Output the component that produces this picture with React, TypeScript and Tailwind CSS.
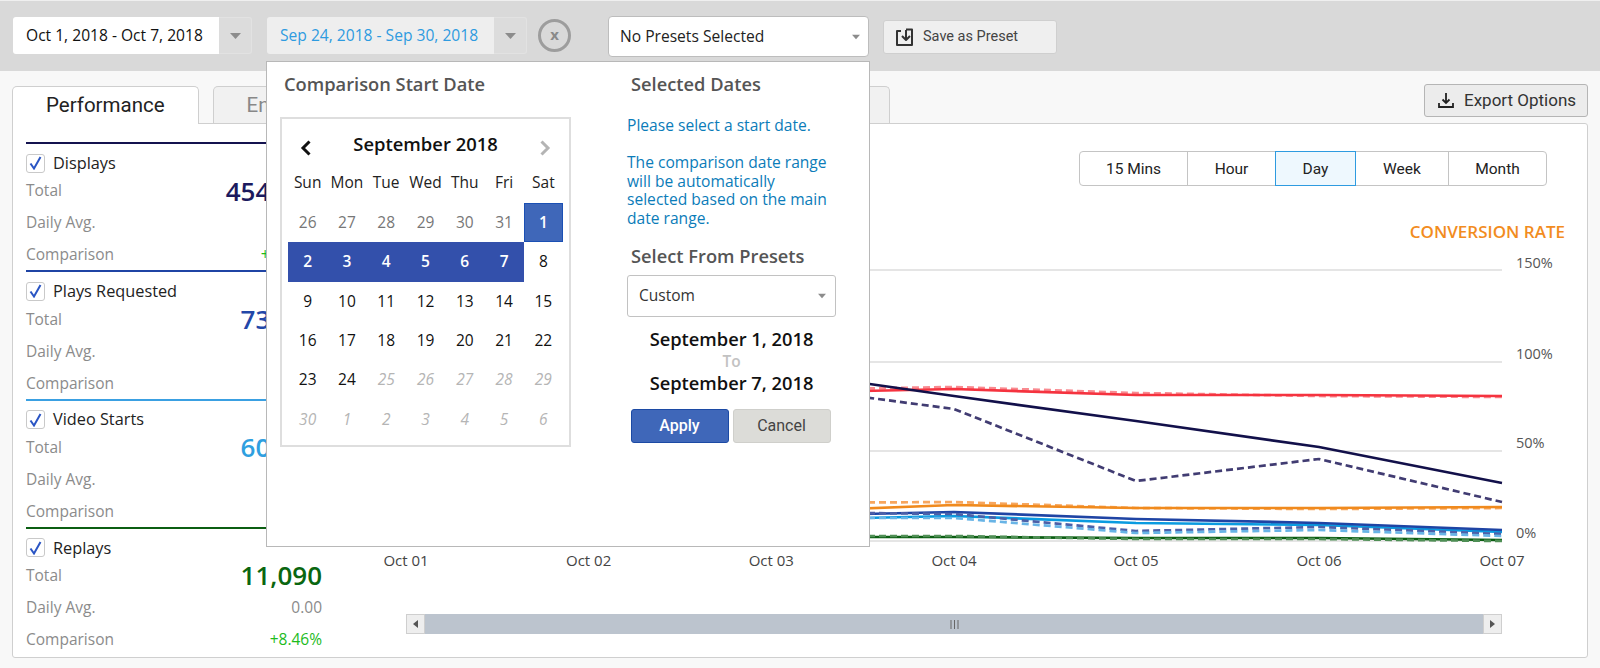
const openSans = "font-['Open_Sans',sans-serif]";

const metrics = [
  { name: "Displays", total: "454,182", avg: "0.00", comparison: "+12.46%", line: "border-[#14134f]", value: "text-[#1c1a5e]" },
  { name: "Plays Requested", total: "73,215", avg: "0.00", comparison: "+8.46%", line: "border-[#1f44a4]", value: "text-[#2347a8]" },
  { name: "Video Starts", total: "60,348", avg: "0.00", comparison: "+8.46%", line: "border-[#3aa0e2]", value: "text-[#2f9fe0]" },
  { name: "Replays", total: "11,090", avg: "0.00", comparison: "+8.46%", line: "border-[#0b5e12]", value: "text-[#0a6610]" },
];

const weekdays = ["Sun", "Mon", "Tue", "Wed", "Thu", "Fri", "Sat"];

type Day = { label: number; kind: "muted" | "normal" | "start" | "range" | "off" };

const days: Day[] = [
  ...[26, 27, 28, 29, 30, 31].map((label): Day => ({ label, kind: "muted" })),
  { label: 1, kind: "start" },
  ...[2, 3, 4, 5, 6, 7].map((label): Day => ({ label, kind: "range" })),
  ...[8, 9, 10, 11, 12, 13, 14, 15, 16, 17, 18, 19, 20, 21, 22, 23, 24].map((label): Day => ({ label, kind: "normal" })),
  ...[25, 26, 27, 28, 29, 30, 1, 2, 3, 4, 5, 6].map((label): Day => ({ label, kind: "off" })),
];

const xs = [406, 588.6, 771.3, 954, 1136, 1319, 1502];

const series = [
  { color: "#f7a65e", ys: [503, 503, 503, 502, 508, 509, 508], dash: "7 4" },
  { color: "#f08a1d", ys: [512, 512, 512, 505, 508, 508, 507] },
  { color: "#f98a90", ys: [390, 390, 390, 387, 393, 396, 397], dash: "7 4" },
  { color: "#f5333f", ys: [393, 393, 393, 389, 395, 395, 396] },
  { color: "#12104a", ys: [370, 370, 370, 396, 421, 447, 483] },
  { color: "#413c72", ys: [385, 385, 385, 409, 481, 459, 502], dash: "7 4" },
  { color: "#0a9be0", ys: [520, 520, 520, 516, 523, 525, 532] },
  { color: "#1f44a4", ys: [516, 516, 516, 512, 519, 523, 530] },
  { color: "#4c60a8", ys: [512, 512, 512, 514, 531, 527, 534], dash: "7 4" },
  { color: "#68b4e6", ys: [518, 518, 518, 518, 533, 530, 536], dash: "7 4" },
  { color: "#0b5e12", ys: [537, 537, 537, 537, 538, 538, 540] },
  { color: "#4f8f55", ys: [536, 536, 536, 536, 539, 539, 541], dash: "7 4" },
];

const Caret = ({ className }: { className: string }) => (
  <svg width="11" height="6" viewBox="0 0 11 6" className={className}>
    <path d="M0 0h11L5.5 6z" fill="currentColor" />
  </svg>
);

const DateRange = ({ label, active }: { label: string; active?: boolean }) => (
  <div className="flex h-[37px]">
    <div
      className={`flex items-center rounded-l-[3px] px-[13px] text-[15.6px] ${
        active ? "w-[227px] bg-[#eeeeee] text-[#2e9be0]" : "w-[206px] bg-white text-[#111]"
      }`}
    >
      {label}
    </div>
    <div className="flex w-[33px] items-center justify-center rounded-r-[3px] border border-l-0 border-[#e2e2e2] bg-[#dcdcdc]">
      <Caret className="text-[#8c8c8c]" />
    </div>
  </div>
);

const Metric = ({ metric }: { metric: (typeof metrics)[number] }) => (
  <section className={`h-[128.3px] border-t-2 pt-[9px] ${metric.line}`}>
    <label className="flex h-5 items-center gap-2">
      <span className="flex size-[19px] items-center justify-center rounded-[3px] border border-[#c9c9c9] bg-white">
        <svg width="13" height="14" viewBox="0 0 13 14" fill="none">
          <path d="M1.5 7.5 5 12.5 11.5 1" stroke="#2a55c4" strokeWidth="2" />
        </svg>
      </span>
      <span className="text-[16.3px] text-[#222]">{metric.name}</span>
    </label>
    <div className="mt-[2px] flex h-8 items-center justify-between">
      <span className="text-[15.5px] text-[#8b8b8b]">Total</span>
      <span className={`text-[26px] font-semibold ${metric.value}`}>{metric.total}</span>
    </div>
    <div className="flex h-8 items-center justify-between">
      <span className="text-[15.5px] text-[#8b8b8b]">Daily Avg.</span>
      <span className="text-[15.5px] text-[#8b8b8b]">{metric.avg}</span>
    </div>
    <div className="flex h-8 items-center justify-between">
      <span className="text-[15.5px] text-[#8b8b8b]">Comparison</span>
      <span className="text-[15.5px] text-[#1dbb1d]">{metric.comparison}</span>
    </div>
  </section>
);

const Chart = () => (
  <svg width="1263" height="330" viewBox="324 250 1263 330" className="block">
    {[270, 362, 451, 541].map((y) => (
      <line key={y} x1="406" x2="1502" y1={y} y2={y} stroke="#dcdcdc" strokeWidth="1.5" />
    ))}
    {series.map((s) => (
      <polyline
        key={s.color}
        points={s.ys.map((y, i) => `${xs[i]},${y}`).join(" ")}
        fill="none"
        stroke={s.color}
        strokeWidth="2.7"
        strokeDasharray={s.dash}
      />
    ))}
    {[
      ["150%", 268],
      ["100%", 359],
      ["50%", 448],
      ["0%", 538],
    ].map(([label, y]) => (
      <text key={label} x="1516" y={y} fontSize="14.5" fill="#555">
        {label}
      </text>
    ))}
    {["Oct 01", "Oct 02", "Oct 03", "Oct 04", "Oct 05", "Oct 06", "Oct 07"].map((label, i) => (
      <text key={label} x={xs[i]} y="566" fontSize="15" fill="#444" textAnchor="middle">
        {label}
      </text>
    ))}
  </svg>
);

const ComparisonPicker = () => (
  <div className="absolute left-[266px] top-[61px] flex h-[486px] w-[604px] border border-[#b8b8b8] bg-white">
    <div className="w-[351px] pl-[13px] pt-[11px]">
      <h2 className="pl-[4px] text-[18.3px] font-semibold leading-[21px] text-[#555]">Comparison Start Date</h2>
      <div className="mt-[23px] w-[291px] border-2 border-[#dedede] px-[6px] pb-[6px]">
        <div className="flex h-[44px] items-center justify-between px-[12px] pt-[6px]">
          <svg width="12" height="16" viewBox="0 0 12 16" fill="none" className="mt-[8px]">
            <path d="M9.5 1.5 3 8l6.5 6.5" stroke="#111" strokeWidth="3" />
          </svg>
          <span className="text-[18.4px] font-semibold text-[#111]">September 2018</span>
          <svg width="12" height="16" viewBox="0 0 12 16" fill="none" className="mt-[8px]">
            <path d="M2.5 1.5 9 8l-6.5 6.5" stroke="#b4b4b4" strokeWidth="3" />
          </svg>
        </div>
        <div className="grid grid-cols-7">
          {weekdays.map((d) => (
            <div key={d} className="flex h-[40px] items-center justify-center text-[15.5px] text-[#222]">
              {d}
            </div>
          ))}
          {days.map((d, i) => (
            <div
              key={i}
              className={`flex h-[39.3px] items-center justify-center text-[15.5px] ${
                d.kind === "muted"
                  ? "text-[#777]"
                  : d.kind === "normal"
                    ? "text-[#111]"
                    : d.kind === "start"
                      ? "border border-[#1b50b4] bg-[#3f67b9] font-semibold text-white"
                      : d.kind === "range"
                        ? "bg-[#3350ab] font-semibold text-white"
                        : "italic text-[#b5b5b5]"
              }`}
            >
              {d.label}
            </div>
          ))}
        </div>
      </div>
    </div>
    <div className="w-[230px] pl-[9px] pt-[11px]">
      <h2 className="pl-[4px] text-[18.3px] font-semibold leading-[21px] text-[#555]">Selected Dates</h2>
      <p className="mt-[22px] text-[15.6px] leading-[18.4px] text-[#0b7cb9]">Please select a start date.</p>
      <p className="mt-[19px] w-[209px] text-[15.6px] leading-[18.4px] text-[#0b7cb9]">
        The comparison date range will be automatically selected based on the main date range.
      </p>
      <h2 className="mt-[18px] pl-[4px] text-[18.3px] font-semibold leading-[21px] text-[#555]">Select From Presets</h2>
      <div className="mt-[9px] flex h-[42px] w-[209px] items-center justify-between rounded-[3px] border border-[#c2c2c2] pl-[11px] pr-[9px] text-[15.5px] text-[#333]">
        Custom
        <Caret className="w-[8px] text-[#8c8c8c]" />
      </div>
      <div className="w-[209px] text-center">
        <div className="mt-[11px] text-[18.3px] font-semibold leading-[22px] text-[#111]">September 1, 2018</div>
        <div className="text-[15.5px] font-semibold leading-[22px] text-[#c2c2c2]">To</div>
        <div className="text-[18.3px] font-semibold leading-[22px] text-[#111]">September 7, 2018</div>
      </div>
      <div className="ml-[3.5px] mt-[15px] flex gap-[4px] font-['Roboto',sans-serif] text-[16px]">
        <button className="h-[34px] w-[98px] rounded-[3px] border border-[#1c4aa4] bg-[#3f67b9] font-medium text-white">
          Apply
        </button>
        <button className="h-[34px] w-[98px] rounded-[3px] border border-[#cfcfcb] bg-[#dcdcd8] text-[#444]">
          Cancel
        </button>
      </div>
    </div>
  </div>
);

export default function App() {
  return (
    <div className={`relative h-[668px] overflow-hidden bg-[#f8f8f8] ${openSans}`}>
      <header className="flex h-[71px] items-start border-t border-[#efefef] bg-[#d9d9d9] pl-[13px]">
        <div className="mt-[16px] flex items-center">
          <DateRange label="Oct 1, 2018 - Oct 7, 2018" />
          <div className="ml-[15px]">
            <DateRange label="Sep 24, 2018 - Sep 30, 2018" active />
          </div>
          <div className="ml-[11px] flex size-[33px] items-center justify-center rounded-full border-[3px] border-[#9d9d9d] pb-[2px] text-[15px] font-bold leading-none text-[#8a8a8a]">
            x
          </div>
        </div>
        <div className="ml-[37px] mt-[15px] flex h-[41px] w-[261px] items-center justify-between rounded-[4px] border border-[#bdbdbd] bg-white pl-[11px] pr-[8px] text-[15.6px] text-[#222]">
          No Presets Selected
          <Caret className="w-[8px] text-[#8c8c8c]" />
        </div>
        <button className="ml-[14px] mt-[19px] flex h-[34px] w-[174px] items-center gap-[9px] rounded-[3px] border border-[#cfcfcf] bg-[#efefef] pl-[11px] font-['Roboto',sans-serif] text-[14.5px] text-[#444]">
          <svg width="19" height="19" viewBox="0 0 19 19" fill="none" stroke="#333" strokeWidth="2" strokeLinejoin="round">
            <path d="M6 3H2v14h15V1.5h-6" />
            <path d="M11 2v10M7 8l4 4 4-4" />
          </svg>
          Save as Preset
        </button>
      </header>

      <div className="mx-[12px] mt-[13px] flex h-[39px] items-start justify-between">
        <div className="mt-[2px] flex w-[878px] gap-[14px]">
          <div className="relative z-10 h-[38px] rounded-t-[5px] border border-b-0 border-[#cfcfcf] bg-white px-[33px] font-['Roboto',sans-serif] text-[20.5px] leading-[37px] text-[#222]">
            Performance
          </div>
          <div className="h-[37px] flex-1 rounded-t-[5px] border border-b-0 border-[#cfcfcf] bg-[#f1f1f1] px-[33px] font-['Roboto',sans-serif] text-[20.5px] leading-[37px] text-[#888]">
            Engagement
          </div>
        </div>
        <button className="flex h-[33px] w-[164px] items-center gap-[10px] rounded-[3px] border border-[#b5b5b5] bg-[#ececec] pl-[13px] font-['Roboto',sans-serif] text-[17px] text-[#333]">
          <svg width="16" height="15" viewBox="0 0 16 15" fill="none" stroke="#222" strokeWidth="1.8">
            <path d="M1 10v4h14v-4M8 0v10M4.5 6.5 8 10l3.5-3.5" />
          </svg>
          Export Options
        </button>
      </div>

      <main className="mx-[12px] flex h-[535px] rounded-b-[3px] rounded-tr-[3px] border border-[#cfcfcf] bg-white">
        <aside className="ml-[13px] mt-[18px] w-[296px]">
          {metrics.map((m) => (
            <Metric key={m.name} metric={m} />
          ))}
        </aside>
        <div className="ml-[2px] flex-1">
          <div className="mr-[40px] mt-[27px] flex h-[35px] justify-end">
            <div className="flex rounded-[4px] border border-[#c4c4c4] text-center font-['Roboto',sans-serif] text-[15.5px] leading-[34px] text-[#222]">
              <div className="w-[108px] rounded-l-[4px] border-r border-[#c4c4c4]">15 Mins</div>
              <div className="w-[87px]">Hour</div>
              <div className="-my-px h-[35px] w-[81px] border border-[#2e9be0] bg-[#eef8fe] leading-[34px]">Day</div>
              <div className="w-[93px] border-r border-[#c4c4c4]">Week</div>
              <div className="w-[97px]">Month</div>
            </div>
          </div>
          <div className="mr-[22px] mt-[36px] text-right text-[17px] font-semibold leading-[20px] text-[#f28c1e]">
            CONVERSION RATE
          </div>
          <div className="mt-[8px]">
            <Chart />
          </div>
          <div className="ml-[82px] mt-[34px] flex h-5 w-[1096px] items-center justify-between bg-[#bcc4ce]">
            <div className="flex h-5 w-[19px] items-center justify-center border border-[#cfcfcf] bg-[#eeeeee] text-[#555]">
              <svg width="5" height="8" viewBox="0 0 5 8"><path d="M5 0v8L0 4z" fill="currentColor" /></svg>
            </div>
            <svg width="9" height="9" viewBox="0 0 9 9" stroke="#666"><path d="M1 0v9M4.5 0v9M8 0v9" /></svg>
            <div className="flex h-5 w-[19px] items-center justify-center border border-[#cfcfcf] bg-[#eeeeee] text-[#555]">
              <svg width="5" height="8" viewBox="0 0 5 8"><path d="M0 0v8l5-4z" fill="currentColor" /></svg>
            </div>
          </div>
        </div>
      </main>

      <ComparisonPicker />
    </div>
  );
}
